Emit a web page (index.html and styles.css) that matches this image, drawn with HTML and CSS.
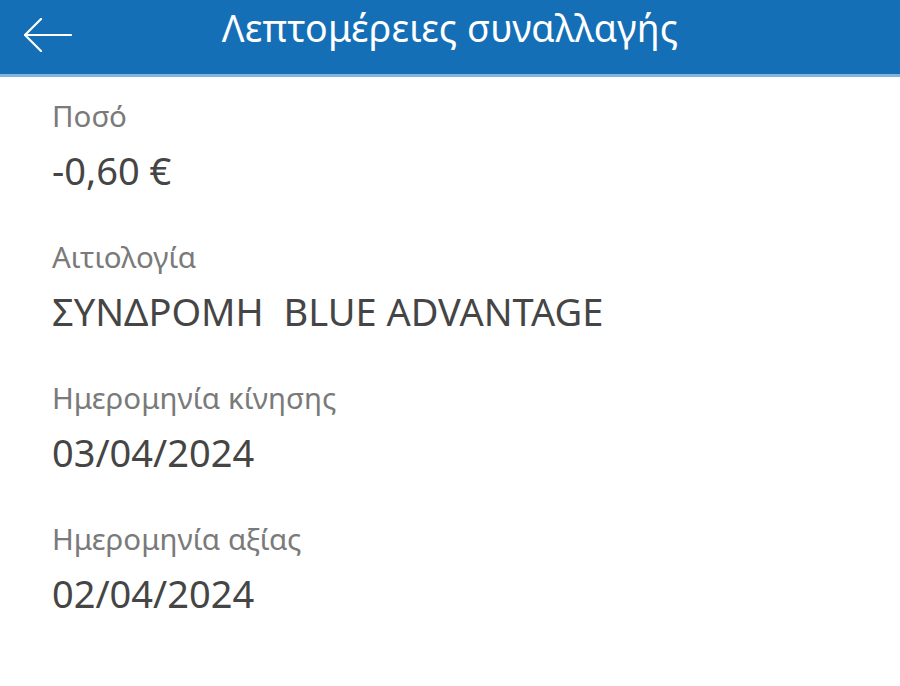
FILE: index.html
```html
<!DOCTYPE html>
<html lang="el">
<head>
<meta charset="utf-8">
<title>Λεπτομέρειες συναλλαγής</title>
<link rel="stylesheet" href="styles.css">
</head>
<body>
<header class="topbar">
  <button class="back" aria-label="Πίσω">
    <svg width="48" height="34" viewBox="0 0 48 34" fill="none" stroke="#fff" stroke-width="2.2" stroke-linecap="round" stroke-linejoin="round">
      <path d="M1 17 H47"/>
      <path d="M17 1 L1 17 L17 33"/>
    </svg>
  </button>
  <h1 class="title">Λεπτομέρειες συναλλαγής</h1>
</header>
<main class="details">
  <section class="field">
    <div class="label">Ποσό</div>
    <div class="value">-0,60 €</div>
  </section>
  <section class="field">
    <div class="label">Αιτιολογία</div>
    <div class="value">ΣΥΝΔΡΟΜΗ&nbsp; BLUE ADVANTAGE</div>
  </section>
  <section class="field">
    <div class="label">Ημερομηνία κίνησης</div>
    <div class="value">03/04/2024</div>
  </section>
  <section class="field">
    <div class="label">Ημερομηνία αξίας</div>
    <div class="value">02/04/2024</div>
  </section>
</main>
</body>
</html>
```
FILE: styles.css
```css
html, body {
  margin: 0;
  padding: 0;
  background: #ffffff;
}
body {
  font-family: "Noto Sans", "Open Sans", "DejaVu Sans", sans-serif;
  width: 900px;
  height: 686px;
  overflow: hidden;
}
.topbar {
  height: 74px;
  box-sizing: border-box;
  padding-top: 6px;
  background: #156fb6;
  border-bottom: 3px solid #7fb6dc;
  display: flex;
  align-items: flex-start;
  justify-content: center;
  position: relative;
  height: 77px;
}
.back {
  position: absolute;
  left: 24px;
  top: 18px;
  background: none;
  border: 0;
  padding: 0;
  line-height: 0;
}
.title {
  margin: 0;
  color: #ffffff;
  font-weight: 400;
  font-size: 37.5px;
  line-height: 44px;
  letter-spacing: 0.2px;
}
.details {
  padding: 20px 0 0 52px;
  display: flex;
  flex-direction: column;
  gap: 45px;
}
.field {
  display: flex;
  flex-direction: column;
  gap: 12px;
}
.label {
  color: #7a7a7a;
  font-size: 29.5px;
  line-height: 38px;
}
.value {
  color: #454545;
  font-size: 38px;
  line-height: 46px;
}
```
